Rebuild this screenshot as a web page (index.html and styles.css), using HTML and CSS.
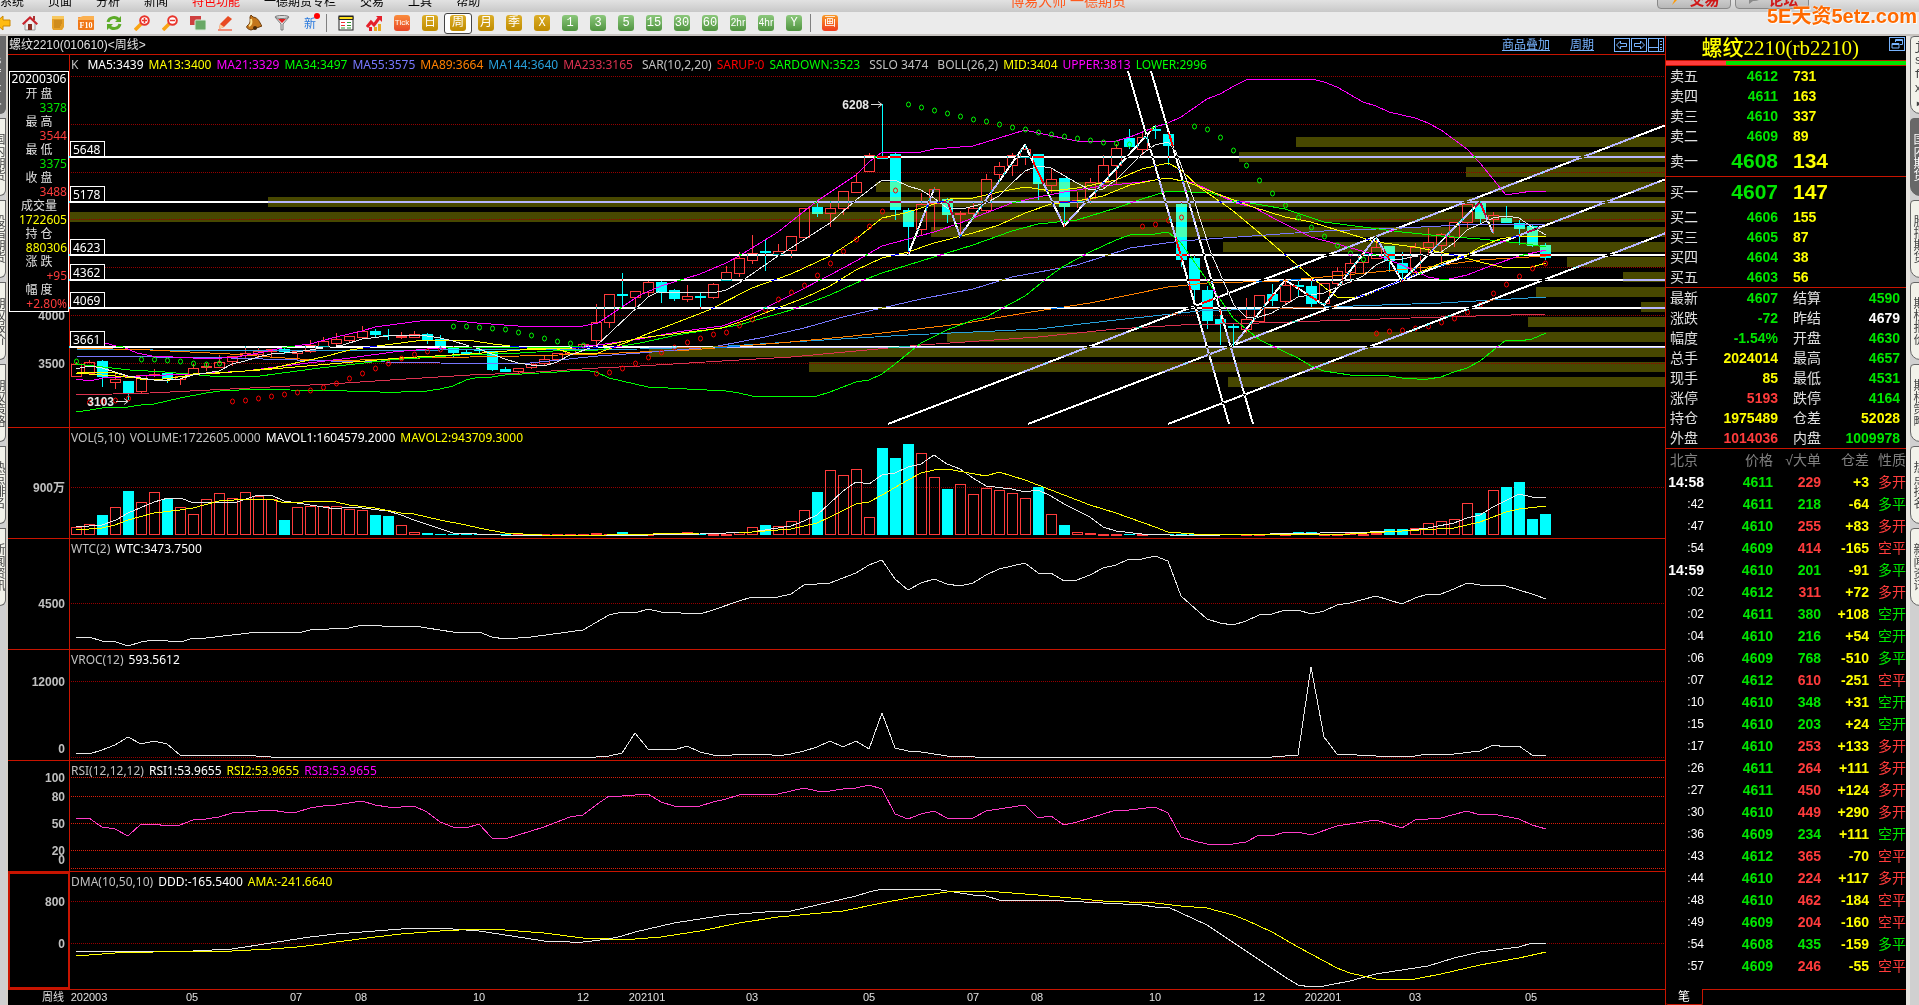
FILE: index.html
```
<!DOCTYPE html>
<html lang="zh-CN">
<head>
  <meta charset="UTF-8">
  <meta name="viewport" content="width=device-width, initial-scale=1.0">
  <title>螺纹2210 周线</title>
  <link rel="stylesheet" href="styles.css">
</head>
<body>
  <header class="menubar">
    <nav class="menu">
      <a href="#">系统</a><a href="#">页面</a><a href="#">分析</a><a href="#">新闻</a><a href="#" class="hot">特色功能</a><a href="#">一德期货专栏</a><a href="#">交易</a><a href="#">工具</a><a href="#">帮助</a>
    </nav>
    <div class="app-title">博易大师 一德期货</div>
    <div class="top-buttons">
      <button><svg width="16" height="14" viewBox="0 0 16 14"><path d="M10 0L2 8h5l-3 6 9-9H8l4-5z" fill="#f90"/></svg>交易</button>
      <button><svg width="18" height="14" viewBox="0 0 18 14"><path d="M1 5a8 5 0 0 1 16 0a8 5 0 0 1-9 5l-4 3v-4A7 5 0 0 1 1 5z" fill="#8a8a8a"/></svg>论坛</button>
    </div>
  </header>

  <div class="toolbar">
    <button class="first" aria-label="后退"><svg width="16" height="16" viewBox="6 0 16 16"><path d="M1 8l8-7v4h7v6H9v4z" fill="#fb1" stroke="#c80"/></svg></button>
    <button aria-label="首页"><svg width="16" height="16" viewBox="0 0 16 16"><path d="M3 8v7h10V8L8 3z" fill="#eee" stroke="#999"/><path d="M11 1h2v4h-2z" fill="#a33"/><path d="M0 8.500L8 1l8 7.500-1.500 1.500L8 4 1.500 10z" fill="#c8232c"/><path d="M6 9h4v6H6z" fill="#8a2b20"/></svg></button>
    <button aria-label="资讯"><svg width="16" height="16" viewBox="0 0 16 16"><path d="M2 1h12v11l-2 3H3l-1-2z" fill="#e5a028"/><path d="M2 1h12v3H2z" fill="#f7c860"/><path d="M4 6h8M4 8h8M4 10h7M4 12h6" stroke="#b97812"/></svg></button>
    <button aria-label="F10"><svg width="16" height="16" viewBox="0 0 16 16"><rect x="0" y="2" width="16" height="13" rx="1" fill="#f07818"/><path d="M0 3l5-2h11v4H0z" fill="#fbb050"/><text x="8" y="13" text-anchor="middle" class="f10">F10</text></svg></button>
    <button aria-label="刷新"><svg width="16" height="16" viewBox="0 0 16 16"><path d="M2 7c1-5 8-6 11-2M14 9c-1 5-8 6-11 2" fill="none" stroke="#5cab28" stroke-width="3"/><path d="M15 1v6H9zM1 15V9h6z" fill="#5cab28"/></svg></button>
    <button aria-label="放大"><svg width="16" height="16" viewBox="0 0 16 16"><path d="M1 15l6-6" stroke="#f9a414" stroke-width="3.500"/><circle cx="10.500" cy="5.500" r="4.300" fill="#fff" stroke="#e8342c" stroke-width="2"/><path d="M8 5.500h5M10.500 3v5" stroke="#e8342c" stroke-width="1.500"/></svg></button>
    <button aria-label="缩小"><svg width="16" height="16" viewBox="0 0 16 16"><path d="M1 15l6-6" stroke="#f9a414" stroke-width="3.500"/><circle cx="10.500" cy="5.500" r="4.300" fill="#fff" stroke="#e8342c" stroke-width="2"/><path d="M8 5.500h5" stroke="#e8342c" stroke-width="1.500"/></svg></button>
    <button aria-label="叠加"><svg width="16" height="16" viewBox="0 0 16 16"><rect x="0" y="1" width="11" height="9" fill="#cf3f3f"/><rect x="5" y="5" width="11" height="10" rx="1" fill="#69a866" stroke="#d8e8d8"/></svg></button>
    <button aria-label="画线"><svg width="16" height="16" viewBox="0 0 16 16"><path d="M2 9l8-8 4 3-8 8-5 2z" fill="#e84a22"/><path d="M1 14l1-5 4 3z" fill="#fbcf9a"/><path d="M0 15h14" stroke="#f26b50" stroke-width="1.500"/></svg></button>
    <button aria-label="预警"><svg width="16" height="16" viewBox="0 0 16 16"><path d="M5 0l2 2c6 1 6 5 9 9L5 15c-4-1-5-3-4-4 4-3 3-5 3-9z" fill="#c4761c" stroke="#6b3a0a"/><path d="M5 4c1 4 0 6-2 7" stroke="#ffe08a" fill="none" stroke-width="2"/><circle cx="9" cy="13" r="2" fill="#4a2a08"/></svg></button>
    <button aria-label="筛选"><svg width="16" height="16" viewBox="0 0 16 16"><path d="M1 2l6 7v6h2V9l6-7z" fill="#e8e8e8" stroke="#777"/><path d="M4 4h8L8 8z" fill="#e02020"/><ellipse cx="8" cy="2" rx="7" ry="1.500" fill="#ddd" stroke="#777"/></svg></button>
    <button class="new">新<i></i></button>
    <span class="sep"></span>
    <button aria-label="报价"><svg width="16" height="16" viewBox="0 0 16 16"><rect x="1" y="1" width="14" height="14" fill="#fff" stroke="#222"/><path d="M1 1.500h14v3H1z" fill="#ffe01a" stroke="#222"/><path d="M3 7.500h4M3 10.500h4" stroke="#e33"/><path d="M9 7.500h4M9 10.500h4M9 13h4M3 13h4" stroke="#393"/></svg></button>
    <button aria-label="走势"><svg width="16" height="16" viewBox="0 0 16 16"><path d="M1 12l4-5 3 3 6-8" fill="none" stroke="#e5202a" stroke-width="3"/><path d="M10 1h6v6z" fill="#e5202a"/><path d="M3 12h3v4H3z" fill="#e5202a"/><path d="M8 12h3v4H8z" fill="#e8a820"/><path d="M12 9h3v7h-3z" fill="#e8a820"/></svg></button>
    <button><span class="chip tick">Tick</span></button>
    <button><span class="chip gold">日</span></button>
    <button class="selected"><span class="chip gold">周</span></button>
    <button><span class="chip gold">月</span></button>
    <button><span class="chip gold">季</span></button>
    <button><span class="chip gold">X</span></button>
    <button><span class="chip green">1</span></button>
    <button><span class="chip green">3</span></button>
    <button><span class="chip green">5</span></button>
    <button><span class="chip green">15</span></button>
    <button><span class="chip green">30</span></button>
    <button><span class="chip green">60</span></button>
    <button><span class="chip green small">2hr</span></button>
    <button><span class="chip green small">4hr</span></button>
    <button><span class="chip green">Y</span></button>
    <span class="sep"></span>
    <button><span class="chip draw">画</span></button>
  </div>
  <div class="watermark">5E天资5etz.com</div>

  <main class="workspace">
    <nav class="rail left">
      <button class="on latin">jsfx▸</button><button>国内期货</button><button>股指期货</button><button>期权报价</button><button>期权策略</button><button>热点排名</button><button>新闻资讯</button>
    </nav>

    <section class="chart">
      <header class="chart-head">
        <h1>螺纹2210(010610)&lt;周线&gt;</h1>
        <a href="#">商品叠加</a><a href="#">周期</a>
        <div class="head-icons">
          <button aria-label="左移"><svg width="17" height="15" viewBox="0 0 17 15"><rect x=".5" y=".5" width="15" height="13"/><path d="M2.500 7l4-4v2.500h6v3h-6V11z"/></svg></button>
          <button aria-label="右移"><svg width="17" height="15" viewBox="0 0 17 15"><rect x=".5" y=".5" width="15" height="13"/><path d="M13.500 7l-4-4v2.500h-6v3h6V11z"/></svg></button>
          <button aria-label="窗口"><svg width="17" height="15" viewBox="0 0 17 15"><rect x=".5" y=".5" width="15" height="13"/><path d="M1 9.500h9.500M10.500 1v12M12 3.500h2M12 6.500h2M12 9.500h2M12 11.500h2"/></svg></button>
        </div>
      </header>

      <div class="panel">
        <svg id="price"></svg>
        <p class="legend"><span class="end">K</span><span class="w">MA5:3439</span><span class="y">MA13:3400</span><span class="m">MA21:3329</span><span class="g">MA34:3497</span><span class="ma55">MA55:3575</span><span class="ma89">MA89:3664</span><span class="ma144">MA144:3640</span><span class="ma233 end">MA233:3165</span><span>SAR(10,2,20)</span><span class="sar">SARUP:0</span><span class="g end">SARDOWN:3523</span><span class="end">SSLO 3474</span><span>BOLL(26,2)</span><span class="y">MID:3404</span><span class="m">UPPER:3813</span><span class="g">LOWER:2996</span></p>
        <dl class="quote-box">
          <dt class="date">20200306</dt>
          <dt>开 盘</dt><dd class="down">3378</dd>
          <dt>最 高</dt><dd class="up">3544</dd>
          <dt>最 低</dt><dd class="down">3375</dd>
          <dt>收 盘</dt><dd class="up">3488</dd>
          <dt>成交量</dt><dd class="y">1722605</dd>
          <dt>持 仓</dt><dd class="y">880306</dd>
          <dt>涨 跌</dt><dd class="up">+95</dd>
          <dt>幅 度</dt><dd class="up">+2.80%</dd>
        </dl>
      </div>
      <div class="panel">
        <svg id="vol"></svg>
        <p class="legend"><span>VOL(5,10)</span><span>VOLUME:1722605.0000</span><span class="w">MAVOL1:1604579.2000</span><span class="y">MAVOL2:943709.3000</span></p>
      </div>
      <div class="panel">
        <svg id="wtc"></svg>
        <p class="legend"><span>WTC(2)</span><span class="w">WTC:3473.7500</span></p>
      </div>
      <div class="panel">
        <svg id="vroc"></svg>
        <p class="legend"><span>VROC(12)</span><span class="w">593.5612</span></p>
      </div>
      <div class="panel">
        <svg id="rsi"></svg>
        <p class="legend"><span>RSI(12,12,12)</span><span class="w">RSI1:53.9655</span><span class="y">RSI2:53.9655</span><span class="m">RSI3:53.9655</span></p>
      </div>
      <div class="panel">
        <svg id="dma"></svg>
        <p class="legend"><span>DMA(10,50,10)</span><span class="w">DDD:-165.5400</span><span class="y">AMA:-241.6640</span></p>
      </div>
      <div class="dates"><svg id="dates"></svg></div>
    </section>

    <aside class="quote">
      <h2>螺纹2210(rb2210)
        <button aria-label="还原"><svg width="16" height="14" viewBox="0 0 16 14"><rect x=".5" y=".5" width="15" height="13"/><path d="M6.500 5V2.500h7v5H11M3 6.500h7v4.500H3zM6.500 3.500h7M3 7.500h7"/></svg></button>
      </h2>
      <div class="ratio"><i></i></div>
      <table class="book">
        <tbody>
          <tr><th>卖五</th><td class="down">4612</td><td>731</td></tr>
          <tr><th>卖四</th><td class="down">4611</td><td>163</td></tr>
          <tr><th>卖三</th><td class="down">4610</td><td>337</td></tr>
          <tr><th>卖二</th><td class="down">4609</td><td>89</td></tr>
          <tr class="big"><th>卖一</th><td class="down">4608</td><td>134</td></tr>
        </tbody>
        <tbody>
          <tr class="big"><th>买一</th><td class="down">4607</td><td>147</td></tr>
          <tr><th>买二</th><td class="down">4606</td><td>155</td></tr>
          <tr><th>买三</th><td class="down">4605</td><td>87</td></tr>
          <tr><th>买四</th><td class="down">4604</td><td>38</td></tr>
          <tr><th>买五</th><td class="down">4603</td><td>56</td></tr>
        </tbody>
      </table>
      <table class="stats">
        <tr><th>最新</th><td class="down">4607</td><th>结算</th><td class="down">4590</td></tr>
        <tr><th>涨跌</th><td class="down">-72</td><th>昨结</th><td class="w">4679</td></tr>
        <tr><th>幅度</th><td class="down">-1.54%</td><th>开盘</th><td class="down">4630</td></tr>
        <tr><th>总手</th><td class="y">2024014</td><th>最高</th><td class="down">4657</td></tr>
        <tr><th>现手</th><td class="y">85</td><th>最低</th><td class="down">4531</td></tr>
        <tr><th>涨停</th><td class="up">5193</td><th>跌停</th><td class="down">4164</td></tr>
        <tr><th>持仓</th><td class="y">1975489</td><th>仓差</th><td class="y">52028</td></tr>
        <tr><th>外盘</th><td class="up">1014036</td><th>内盘</th><td class="down">1009978</td></tr>
      </table>
      <table class="ticks">
        <thead><tr><th>北京</th><th>价格</th><th>√大单</th><th>仓差</th><th>性质</th></tr></thead>
        <tbody id="ticks"></tbody>
      </table>
      <div class="quote-tabs"><button>笔</button><span></span></div>
    </aside>

    <nav class="rail right">
      <button class="latin">jsfx▸</button><button class="on">国内期货</button><button>股指期货</button><button>期权报价</button><button>期权策略</button><button>热点排名</button><button>新闻资讯</button>
    </nav>
  </main>
  <script src="chart.js"></script>
</body>
</html>
```
FILE: styles.css
```
* {
  box-sizing: border-box;
}

body {
  margin: 0;
  height: 100vh;
  display: flex;
  flex-direction: column;
  overflow: hidden;
  background: #000;
  color: #c0c0c0;
  font-family: "Noto Sans", "Noto Sans CJK SC", sans-serif;
  font-size: 12px;
}

button {
  border: 0;
  padding: 0;
  background: none;
  color: inherit;
  font: inherit;
}

h1, h2, p, dl, dd {
  margin: 0;
}

.w { color: #fff; }
.y { color: #ff0; }
.m { color: #f0f; }
.g { color: #0f0; }
.up { color: #ff3c3c; }
.down { color: #00e600; }
.sar { color: #f00; }
.ma55 { color: #7878ff; }
.ma89 { color: #ff8000; }
.ma144 { color: #28a0dc; }
.ma233 { color: #dc3250; }

/* menu */
.menubar {
  flex: none;
  display: flex;
  align-items: flex-end;
  height: 12px;
  overflow: hidden;
  background: linear-gradient(#e2e2e2, #c8c8c8);
}

.menu {
  flex: 25;
  display: flex;
  gap: 24px;
  line-height: 16px;
  padding-bottom: 2px;
}

.menu a {
  color: #000;
  text-decoration: none;
}

.menu .hot {
  color: #f00;
}

.app-title {
  flex: 16;
  padding-bottom: 2px;
  font-size: 14px;
  line-height: 18px;
  color: #ff5a1e;
}

.top-buttons {
  display: flex;
  gap: 4px;
  padding: 0 110px 3px 0;
}

.top-buttons button {
  display: flex;
  align-items: center;
  justify-content: center;
  gap: 5px;
  width: 74px;
  height: 22px;
  border: 1px solid #888;
  border-radius: 4px;
  background: linear-gradient(#e8e8e8, #b8b8b8);
  font-size: 15px;
  font-weight: bold;
  color: #d01818;
}

/* toolbar */
.toolbar {
  flex: none;
  display: flex;
  align-items: center;
  height: 24px;
  background: #ebebeb;
  border-bottom: 2px solid #c8c4c0;
}

.toolbar button {
  display: flex;
  align-items: center;
  justify-content: center;
  width: 28px;
  height: 21px;
}

.toolbar .first {
  width: 16px;
}

.toolbar .selected {
  border: 1px solid #444;
  border-radius: 3px;
  background: #fff;
}

.toolbar .new {
  position: relative;
  color: #2878dc;
}

.new i {
  position: absolute;
  top: 0;
  right: 4px;
  width: 6px;
  height: 6px;
  border-radius: 50%;
  background: #f00;
}

.sep {
  width: 8px;
  height: 18px;
  border-left: 1px solid #808080;
  margin: 0 -2px 0 2px;
}

.f10 {
  font: bold 8px "Liberation Serif", serif;
  fill: #fff;
}

.chip {
  width: 16px;
  height: 16px;
  border-radius: 3px;
  overflow: hidden;
  color: #fff;
  font: 12px/16px "Liberation Mono", "Noto Sans CJK SC", monospace;
  text-align: center;
}

.chip.gold { background: linear-gradient(#dcae28, #c08c00); }
.chip.green { background: linear-gradient(#8cc87c, #509440); }
.chip.draw { background: linear-gradient(#f89a28, #f03c20); }
.chip.tick {
  background: linear-gradient(#fa8c3c, #e84828);
  font-family: "Liberation Sans", sans-serif;
  font-size: 8px;
}
.chip.small {
  font-family: "Liberation Sans", sans-serif;
  font-size: 10px;
}

.watermark {
  position: absolute;
  top: 4px;
  right: 2px;
  font: bold 20px/24px "Liberation Sans", "Noto Sans CJK SC", sans-serif;
  color: #ff6a00;
  text-shadow: 0 0 2px #fff, 1px 1px 1px #fff;
}

/* workspace */
.workspace {
  flex: 1;
  min-height: 0;
  display: grid;
  grid-template-columns: 8px minmax(0, 1fr) 241px 13px;
}

.rail {
  display: flex;
  flex-direction: column;
  gap: 4px;
  overflow: hidden;
  background: #d0d0d0;
}

.rail.left {
  border-right: 2px solid #d4d0c8;
}

.rail.right {
  border-left: 4px solid #e8e4e0;
}

.rail button {
  flex: none;
  display: flex;
  align-items: center;
  justify-content: center;
  height: 78px;
  border: 1px solid #666;
  background: #f2f2ea;
  color: #444;
  writing-mode: vertical-rl;
  font-size: 12px;
  line-height: 14px;
  white-space: nowrap;
}

.rail .latin {
  text-orientation: upright;
  font-family: "Liberation Mono", monospace;
}

.rail.left button {
  align-items: flex-start;
  border-left: 0;
  border-radius: 0 0 8px 0;
}

.rail.right button {
  width: 16px;
  border-radius: 4px 0 0 10px;
}

.rail .on {
  background: #686868;
  color: #fff;
}

/* chart */
.chart {
  display: grid;
  grid-template-rows: 19px 373fr 111fr 111fr 111fr 111fr 118fr 15px;
  min-height: 0;
}

.chart-head {
  display: flex;
  align-items: center;
  gap: 20px;
  border-bottom: 1px solid #c81400;
}

.chart-head h1 {
  flex: 1;
  padding-left: 1px;
  font: 12px/18px "Liberation Sans", "Noto Sans CJK SC", sans-serif;
  color: #e0e0e0;
}

.chart-head a {
  color: #78b4ff;
  line-height: 18px;
}

.head-icons {
  display: flex;
}

.chart-head button,
.quote h2 button {
  display: flex;
}

.chart-head svg,
.quote h2 svg {
  fill: none;
  stroke: #78b4ff;
}

.panel {
  position: relative;
  min-height: 0;
  border-bottom: 1px solid #c81400;
}

.panel svg,
.dates svg {
  display: block;
  position: absolute;
  width: 100%;
  height: 100%;
}

.dates {
  position: relative;
}

.legend {
  position: absolute;
  top: 1px;
  left: 63px;
  display: flex;
  gap: 5px;
  line-height: 18px;
  white-space: nowrap;
}

.legend .end {
  margin-right: 4px;
}

.quote-box {
  position: absolute;
  top: 16px;
  left: 1px;
  width: 60px;
  padding: 0 1px;
  border: 1px solid #fff;
  background: #000;
  line-height: 14px;
  text-align: right;
}

.quote-box dt {
  color: #e0e0e0;
  text-align: center;
  white-space: pre;
}

.quote-box .date {
  margin-bottom: 1px;
  color: #fff;
}

/* chart drawing */
.grid { stroke: #960000; stroke-dasharray: 1 1; }
.grid.bright { stroke: #dc1e0a; }
.axis { stroke: #c81400; }
.axis-label {
  fill: #c0c0c0;
  font: bold 12px "Liberation Sans", "Noto Sans CJK SC", sans-serif;
  text-anchor: end;
}
.date-label {
  fill: #e0e0e0;
  font: 11px "Liberation Sans", "Noto Sans CJK SC", sans-serif;
  text-anchor: middle;
}
.line { fill: none; shape-rendering: crispEdges; }
.band { fill: #484800; }
.drawn {
  fill: none;
  stroke: #fff;
  stroke-width: 2;
  shape-rendering: crispEdges;
  mix-blend-mode: difference;
}
.tag { fill: #000; stroke: #fff; }
.tag-label { fill: #fff; font-size: 12px; }
.peak { fill: #e8e8e8; font: bold 12px "Liberation Sans", sans-serif; text-anchor: end; }
.focus { fill: none; stroke: #c81400; stroke-width: 2; }

/* quote panel */
.quote {
  display: flex;
  flex-direction: column;
  min-height: 0;
  border-left: 1px solid #c81400;
}

.quote h2 {
  display: flex;
  align-items: center;
  justify-content: flex-end;
  gap: 30px;
  height: 24px;
  padding-right: 1px;
  font: 500 21px/24px "Liberation Serif", "Noto Sans CJK SC", serif;
  color: #ff0;
}

.quote h2 button {
  align-self: flex-start;
  padding-top: 1px;
}

.ratio {
  height: 6px;
  border: solid #c81400;
  border-width: 1px 0;
  background: #00e600;
}

.ratio i {
  display: block;
  width: 25%;
  height: 4px;
  background: #ff3c3c;
}

.quote table {
  width: 100%;
  border-collapse: collapse;
  table-layout: fixed;
  font: bold 14px/20px "Liberation Sans", "Noto Sans CJK SC", sans-serif;
}

.quote th {
  padding: 0 0 0 4px;
  text-align: left;
  font-weight: normal;
  color: #e0e0e0;
}

.quote td {
  padding: 0;
  text-align: right;
}

.book {
  color: #ff0;
}

.book tbody {
  border-bottom: 1px solid #c81400;
}

.book th {
  width: 50px;
}

.book td:nth-child(2) {
  width: 62px;
}

.book td:last-child {
  padding-left: 15px;
  text-align: left;
}

.book .big td {
  font-size: 21px;
  line-height: 30px;
}

.stats {
  border-bottom: 1px solid #c81400;
}

.stats th {
  width: 48px;
}

.stats th:nth-child(3) {
  width: 62px;
  padding-left: 15px;
}

.stats td:last-child {
  padding-right: 6px;
}

.stats td:nth-child(2) {
  width: 64px;
}

.quote .ticks {
  line-height: 22px;
}

.ticks th {
  padding: 0;
  text-align: right;
  color: #808080;
}

.ticks th:first-child {
  width: 38px;
  padding-left: 4px;
  text-align: left;
}

.ticks td:first-child {
  color: #fff;
}

.ticks .sec td:first-child {
  font-size: 12px;
  font-weight: normal;
}

.ticks th:nth-child(2) { width: 69px; }
.ticks th:nth-child(3) { width: 48px; }
.ticks th:nth-child(4) { width: 48px; }
.ticks td:nth-child(4) { color: #ff0; }
.ticks td:last-child { font-weight: normal; }

.quote-tabs {
  display: flex;
  height: 16px;
  margin-top: auto;
}

.quote-tabs button {
  width: 37px;
  border: solid #c81400;
  border-width: 0 1px 1px 0;
  border-radius: 0 0 2px 2px;
  line-height: 14px;
  color: #fff;
}

.quote-tabs span {
  flex: 1;
  border-top: 1px solid #c81400;
}
```
FILE: chart.js
```
const NS = 'http://www.w3.org/2000/svg';
const AXIS = 61;      // width of the scale column
const WIDTH = 1657;   // nominal width the series were plotted on
const UP = '#ff3c3c', DOWN = '#00ffff';

// body top, body bottom, high, low for every week
const candles = `
r364,376,362,376 r362,373,360,373 c361,377,360,387 r379,382,373,389 c381,393,381,400 r375,391,375,393 r374,375,369,377
c373,379,373,383 r376,379,376,385 r368,374,364,374 r366,367,363,371 r362,367,355,367 r356,361,356,366 r353,355,346,358
r351,354,347,358 r349,351,349,358 c349,352,348,354 r351,353,351,360 r345,351,340,353 r341,346,337,346 r339,343,333,345
r336,340,336,343 r331,337,326,337 c331,335,329,337 c335,336,329,340 r336,337,332,339 r334,337,331,337 c334,340,333,344
c339,346,335,348 c348,353,346,357 c352,354,350,355 c350,351,348,353 c351,370,351,371 c369,372,367,372 r368,371,368,373
r364,367,362,369 r359,363,356,365 r353,359,353,359 r348,353,348,353 r344,349,344,349 r322,340,304,346 r294,322,294,328
c294,296,273,306 r291,297,291,308 r282,292,281,296 c282,293,281,303 c290,299,289,301 r296,299,285,302 c296,298,293,309
r284,297,283,299 r272,280,266,280 r258,273,252,277 r253,260,235,264 c251,253,239,271 r251,254,244,255 r236,250,236,258
r208,237,208,237 c207,214,202,217 r208,213,201,227 r191,208,191,215 r182,192,173,193 r155,171,153,171 c156,159,104,159
c154,210,152,220 c210,227,208,255 r204,229,193,235 r189,203,187,230 c199,215,198,223 r213,214,211,237 r208,213,202,215
r179,210,174,213 r166,174,162,182 r155,165,153,176 r149,157,145,165 c154,184,154,200 r179,185,169,193 c178,207,178,227
r200,201,192,208 r182,198,178,204 r165,182,155,188 r148,165,144,185 c138,147,129,149 r137,149,133,155 c129,131,125,139
c134,146,132,165 c204,260,202,267 c258,290,255,300 c290,321,286,329 c319,324,310,345 c326,328,323,346 r319,329,298,333
r295,321,295,323 c294,301,284,306 r285,301,279,304 c285,287,279,297 c286,304,279,308 r283,303,283,305 r271,283,267,287
r263,272,259,283 r254,262,254,273 r247,258,238,258 c246,261,246,272 c263,273,252,282 r247,272,243,272 r242,247,228,255
r234,245,233,264 r222,237,222,247 r204,222,204,228 c203,219,201,223 r215,219,212,234 c218,223,206,223 c223,229,220,245
c226,246,224,247 c245,258,243,260`.trim().split(/\s+/);

const volumes = [
  8,11,20,28,44,33,43,36,28,21,36,42,37,43,39,36,15,28,29,29,29,26,25,20,19,10,3,2,1,1,1,1,1,1,1,1,1,1,1,1,2,1,3,1,1,1,1,3,
  1,1,1,3,8,10,9,14,25,43,65,60,66,18,87,77,91,82,58,46,51,41,47,45,42,37,48,21,10,3,2,1,1,1,1,1,1,1,1,1,1,1,1,1,1,1,3,3,1,1,2,1,2,
  6,6,7,12,14,16,32,22,45,48,53,16,21
];

// volume-at-price bands: [top, left]
const bands = [[137,1296],[152,1239],[167,1466],[182,876],[197,268],[212,70],[227,931],[242,1223],[257,1567],[272,1623],
  [287,1536],[302,1641],[317,1528],[332,947],[347,649],[362,809],[377,1228]];

const levels = [[5648,156],[5178,201],[4623,254],[4362,279],[4069,307],[3661,346]];

const averages = {
  '#dc3250': '76,395 150,393 230,389 330,384 390,380 470,375 520,373 598,368 640,366 722,361 791,357 856,351 921,345 1038,337 1116,329 1181,325 1260,323 1350,320 1441,317 1546,314',
  '#28a0dc': '76,349 230,351 440,350 640,349 713,347 791,342 908,335 1038,329 1116,320 1181,313 1200,311 1324,307 1441,303 1546,297',
  '#ff8000': '76,348 150,350 230,354 270,357 330,361 420,358 520,356 598,354 640,352 689,350 779,343 843,337 882,333 960,324 1025,313 1090,303 1168,287 1207,283 1280,281 1376,272 1428,267 1480,260 1546,256',
  '#7878ff': '76,356 230,358 330,361 440,363 520,364 598,356 640,353 689,349 713,347 765,337 804,328 843,317 882,308 921,299 973,289 1012,277 1077,265 1130,248 1181,241 1280,234 1324,231 1402,228 1480,224 1546,224',
  '#00ff00': '76,364 130,370 165,372 210,376 260,376 320,368 390,360 460,355 520,353 570,350 598,350 640,343 677,335 739,325 791,310 830,295 856,283 882,273 934,257 973,245 1012,231 1038,224 1077,220 1116,208 1142,199 1168,191 1211,193 1233,200 1285,209 1324,222 1363,227 1402,232 1441,236 1480,239 1519,243 1546,247',
  '#ff00ff': '76,379 90,381 103,378 140,376 193,374 245,371 300,364 350,358 393,352 427,349 466,347 570,347 598,345 640,339 677,332 722,326 739,320 765,308 791,295 830,275 856,261 882,246 908,239 934,232 960,223 986,213 1012,203 1038,197 1064,192 1103,186 1142,182 1168,178 1194,183 1236,203 1253,207 1277,220 1311,237 1337,244 1376,255 1402,265 1428,277 1445,280 1467,275 1493,265 1519,256 1546,250',
  '#ffff00': '76,372 115,373 140,379 157,380 170,380 180,379 193,374 220,373 245,371 273,368 300,362 323,357 350,350 377,346 401,343 423,340 467,340 493,344 527,348 557,349 570,353 598,353 625,343 652,332 709,310 752,288 791,274 830,256 856,239 882,218 905,213 934,204 950,199 973,198 999,192 1025,187 1051,191 1077,188 1116,180 1142,169 1168,163 1181,170 1199,187 1232,210 1268,240 1311,277 1337,297 1350,298 1367,295 1402,280 1441,263 1467,255 1480,247 1500,239 1519,236 1546,237',
  '#ffff01': '76,373 115,376 156,380 200,374 260,370 330,364 400,358 470,354 520,350 598,347 640,338 722,328 752,318 804,298 830,286 856,270 882,258 908,252 934,243 973,233 999,225 1025,213 1051,204 1077,201 1103,196 1130,185 1155,180 1168,178 1187,182 1215,193 1253,207 1285,217 1311,222 1337,230 1376,242 1415,247 1454,255 1480,262 1506,268 1532,267 1546,263',
  '#ff00fe': '105,343 116,346 123,347 137,353 152,356 193,358 207,359 237,357 258,353 287,347 310,344 336,337 362,331 375,327 427,320 447,320 477,323 518,326 557,326 583,326 598,323 625,305 640,295 661,286 700,274 726,263 739,256 765,240 778,232 817,201 856,175 869,162 882,152 921,152 934,149 973,146 999,138 1025,130 1038,133 1077,141 1116,141 1130,137 1155,127 1168,123 1181,117 1207,99 1220,94 1234,86 1246,80 1260,79 1312,79 1324,82 1337,87 1363,102 1376,106 1389,112 1415,118 1428,123 1441,130 1467,149 1480,163 1506,195 1519,193 1532,191 1546,192',
  '#00ff01': '76,412 90,410 102,408 128,407 141,405 154,404 180,398 206,393 220,391 258,389 290,390 347,391 380,392 401,392 427,391 440,389 453,386 466,380 479,377 492,377 505,375 557,372 583,370 596,372 609,378 648,387 687,389 726,391 739,393 752,396 765,397 791,396 804,397 817,396 830,392 856,382 869,380 882,374 895,364 921,343 947,330 973,320 986,317 999,310 1025,296 1051,275 1064,266 1090,252 1116,240 1130,235 1155,234 1168,232 1181,243 1200,270 1233,318 1246,329 1260,340 1285,352 1298,358 1311,366 1324,371 1350,375 1376,375 1389,376 1402,378 1417,379 1428,379 1441,377 1454,372 1467,368 1480,361 1506,340 1519,341 1532,339 1546,333',
  '#e8e8e8': '76,369 89,366 102,368 115,372 128,376 141,378 154,380 167,380 180,379 193,375 206,373 219,371 232,364 245,361 258,357 271,354 297,352 323,348 343,345 362,339 388,336 414,335 427,336 440,338 453,341 466,345 479,349 492,354 505,359 518,363 531,365 544,366 557,362 570,355 596,346 645,300 648,297 658,292 713,293 726,290 739,283 778,256 791,248 830,223 856,200 882,180 895,180 908,186 921,190 934,198 947,208 962,209 986,203 999,196 1012,183 1025,171 1038,166 1051,168 1077,183 1090,190 1103,189 1116,180 1142,154 1155,145 1168,142 1175,150 1181,165 1194,200 1211,253 1234,305 1246,317 1259,317 1272,313 1285,305 1298,297 1324,293 1337,287 1350,282 1363,276 1376,265 1389,259 1402,259 1428,254 1441,252 1454,243 1467,230 1480,224 1493,218 1506,216 1519,218 1532,227 1546,235'
};

// parabolic SAR dots: [first week, values]
const sarDown = [[0,[361]],[5,[359,359,360,361,363,364,363]],[29,[326,326,327,328,329,332,335,338,341,343,345]],
  [64,[104,107,110,113,116,119,121,124,127,129,132,134,136,138,140,142,143,144]],
  [86,[126,129,137,150,165,180,193,205,217,227,236,245,253,259]]];
const sarUp = [[1,[402,401,400,398]],[12,[401,400,398,396,394,392,390,387,383,378,373,368,363,358,354,351,349]],
  [40,[373,372,368,363,357,352,347,342,338,334,332,325,319,309,299,292,285,275,263,251,239,226,211,190]],
  [82,[226,224,220,217]],[100,[333,331,330,328,326,322,318,312,304,293,284,276,268,263]]];

const drawn = ['888,424 1666,125','1028,424 1666,179','1168,424 1666,233','1128,71 1229,424','1151,71 1253,424',
  '908,255 934,189','947,200 960,236 1025,145 1064,226 1155,126','1233,346 1285,280 1324,305 1376,237 1402,281 1480,202 1493,233'];

const mavol1 = '76,527 89,526 102,525 116,520 128,513 154,502 168,498 181,498 193,503 205,502 237,502 258,495 271,495 284,501 336,509 349,507 362,508 388,511 401,515 414,520 453,533 500,535 596,536 700,534 752,532 791,526 804,521 817,515 843,491 856,482 869,484 882,475 895,473 908,467 921,464 934,455 947,464 960,469 973,478 986,486 1012,489 1025,492 1038,490 1051,496 1064,504 1090,517 1103,527 1116,531 1142,534 1170,535 1220,535 1370,532 1402,531 1428,528 1454,523 1467,518 1480,515 1493,507 1519,494 1532,497 1546,498';
const mavol2 = '76,530 102,528 115,525 128,520 154,513 180,510 193,508 219,501 250,499 271,499 284,503 323,501 336,502 349,505 375,508 401,513 414,514 440,520 466,525 479,528 505,533 560,536 700,533 739,533 791,529 817,523 830,517 856,504 869,502 882,495 908,480 921,473 934,470 947,469 986,476 999,472 1025,480 1038,485 1090,505 1116,513 1155,527 1168,532 1194,534 1350,534 1454,528 1467,525 1480,522 1506,512 1519,509 1546,506';
const wtc = '76,637 89,637 102,641 116,642 128,646 141,642 154,640 181,642 193,638 206,638 258,632 284,632 298,633 310,630 349,628 362,625 401,627 414,626 427,628 453,632 479,632 492,637 505,639 531,637 583,630 609,615 622,612 635,613 648,609 661,612 700,614 713,610 739,601 752,597 765,598 778,597 791,594 804,585 830,583 856,573 869,565 882,560 895,579 908,590 921,583 934,579 947,584 960,586 973,583 986,575 999,569 1025,563 1038,573 1051,573 1064,581 1077,580 1090,575 1103,568 1116,565 1129,559 1142,559 1155,556 1168,561 1181,596 1207,619 1220,623 1233,625 1246,621 1259,615 1272,614 1285,610 1298,610 1311,614 1324,611 1337,605 1350,603 1376,596 1402,604 1415,598 1428,594 1441,594 1454,589 1467,583 1480,585 1506,586 1519,590 1532,594 1546,599';
const vroc = '76,753 89,754 102,750 115,745 128,737 141,744 154,741 167,744 180,755 240,755 271,757 596,757 609,756 622,753 635,733 648,749 674,750 687,746 700,752 713,755 726,756 739,754 765,754 778,756 791,754 804,751 817,747 830,741 843,747 856,741 869,749 882,713 895,748 908,751 921,752 947,756 975,757 1272,757 1298,755 1311,667 1324,737 1337,754 1376,756 1415,756 1428,754 1454,754 1480,751 1493,745 1506,747 1519,746 1532,755 1546,755';
const rsi = '76,819 89,818 102,827 115,829 128,836 141,824 154,824 167,826 180,825 193,820 206,819 219,817 232,813 271,810 284,812 297,812 310,808 323,806 336,805 362,801 375,805 388,807 401,807 414,806 427,812 440,822 453,827 466,828 479,824 492,838 505,839 544,827 570,817 583,815 596,805 609,796 622,796 648,794 661,802 674,806 700,806 713,802 726,799 739,795 752,794 778,794 804,788 817,791 830,791 843,789 856,788 869,785 882,789 895,814 908,819 921,814 934,811 947,818 973,818 986,811 1012,807 1025,805 1038,818 1051,816 1064,825 1077,822 1103,814 1116,810 1129,810 1155,807 1168,813 1181,837 1194,841 1207,844 1233,844 1246,842 1259,835 1272,836 1285,832 1298,832 1311,835 1337,826 1376,820 1402,828 1415,820 1441,818 1467,811 1480,815 1493,814 1519,819 1532,825 1546,829';
const ddd = '76,952 95,951 115,951 128,952 193,951 232,949 271,943 310,937 336,934 375,931 414,928 440,928 479,931 492,933 544,941 570,942 583,942 609,939 622,936 635,932 674,923 700,919 726,915 765,912 791,911 830,902 856,896 869,892 882,889 934,889 947,891 960,893 973,895 986,896 999,900 1012,901 1025,900 1051,900 1064,901 1103,903 1142,905 1155,907 1168,907 1194,919 1207,925 1246,951 1285,977 1298,985 1311,987 1324,986 1350,981 1376,974 1428,966 1454,958 1480,952 1519,947 1532,943 1546,943';
const ama = '76,956 115,953 154,952 180,951 232,951 271,949 297,947 323,944 336,942 375,937 401,934 440,931 479,929 505,930 544,933 583,938 609,939 635,939 661,937 700,931 739,923 778,917 843,911 882,903 908,898 947,892 986,891 1038,895 1103,901 1155,903 1181,906 1207,908 1233,915 1246,920 1272,932 1298,947 1324,961 1337,968 1350,973 1376,979 1402,980 1415,979 1441,974 1480,965 1519,958 1546,952';

// one drawing surface per panel; top/height give its nominal range
function surface(id, top, height) {
  const svg = document.getElementById(id);
  svg.innerHTML = '';
  const w = svg.clientWidth;
  const kx = (w - AXIS) / (WIDTH - AXIS);
  const ky = svg.clientHeight / height;
  const s = {
    w, h: svg.clientHeight, ky,
    x: v => AXIS + (v - 8 - AXIS) * kx,
    y: v => (v - top) * ky,
    week: i => AXIS + (7 + i * 13) * kx,
    half: Math.max(2, Math.round(5 * kx)),
    add(tag, attrs, text) {
      const el = document.createElementNS(NS, tag);
      for (const k in attrs) el.setAttribute(k, attrs[k]);
      if (text) el.textContent = text;
      svg.appendChild(el);
      return el;
    },
    rect(x, y, width, h, fill) {
      s.add('rect', { x, y, width, height: Math.max(1, h), fill, 'shape-rendering': 'crispEdges' });
    },
    line(points, stroke, cls) {
      const mapped = points.split(' ').map(p => {
        const [a, b] = p.split(',');
        return s.x(+a) + ',' + s.y(+b);
      }).join(' ');
      s.add('polyline', { points: mapped, stroke, class: cls || 'line' });
    },
    grid(rows, bright) {
      rows.forEach(([v, label, at]) => {
        const y = Math.round(s.y(v)) + 0.5;
        s.add('line', { x1: AXIS + 2, x2: w, y1: y, y2: y, class: bright ? 'grid bright' : 'grid' });
        if (label) s.add('text', { x: AXIS - 4, y: s.y(at || v) + 5, class: 'axis-label' }, label);
      });
      s.add('line', { x1: AXIS + 0.5, x2: AXIS + 0.5, y1: 0, y2: s.h, class: 'axis' });
    },
    box(x, y1, y2) {
      s.add('rect', { x: x - s.half + 0.5, y: Math.round(y1) + 0.5, width: s.half * 2, height: Math.max(1, Math.round(y2 - y1)), fill: 'none', stroke: UP });
    }
  };
  return s;
}

function drawPrice() {
  const s = surface('price', 55, 372);
  s.add('rect', { width: s.w, height: s.h, fill: '#000' });
  bands.forEach(([t, l]) => s.add('rect', { x: s.x(l), y: s.y(t), width: s.w - s.x(l), height: 10 * s.ky, class: 'band' }));
  s.grid([[76], [124], [172], [219], [267], [315, '4000'], [363, '3500']]);

  candles.forEach((c, i) => {
    const [top, bottom, high, low] = c.slice(1).split(',').map(Number);
    const x = Math.round(s.week(i));
    if (c[0] === 'r') {
      s.rect(x, s.y(high), 1, s.y(top) - s.y(high), UP);
      s.rect(x, s.y(bottom), 1, s.y(low) - s.y(bottom), UP);
      s.box(x, s.y(top), s.y(bottom));
    } else {
      s.rect(x, s.y(high), 1, s.y(low) - s.y(high), DOWN);
      s.rect(x - s.half, s.y(top), s.half * 2 + 1, s.y(bottom) - s.y(top), DOWN);
      // tint where a body crosses a band
      bands.forEach(([t, l]) => {
        const a = Math.max(t, top), b = Math.min(t + 10, bottom);
        if (b > a && s.x(l) < x) s.rect(x - s.half, s.y(a), s.half * 2 + 1, s.y(b) - s.y(a), '#48ffb7');
      });
    }
  });

  for (const color in averages) s.line(averages[color], color);
  [[sarDown, '#00ff00'], [sarUp, '#ff0000']].forEach(([runs, stroke]) => runs.forEach(([from, ys]) =>
    ys.forEach((v, i) => s.add('ellipse', { cx: s.week(from + i) + 0.5, cy: s.y(v) + 0.5, rx: 2, ry: 2.5, fill: 'none', stroke }))));

  drawn.forEach(d => s.line(d, '#fff', 'drawn'));
  levels.forEach(([price, v]) => {
    s.line(`69,${v + 1} 1666,${v + 1}`, '#fff', 'drawn');
    s.add('rect', { x: AXIS + 1.5, y: s.y(v - 15) + 0.5, width: 34, height: 15, class: 'tag' });
    s.add('text', { x: AXIS + 4, y: s.y(v) - 2, class: 'tag-label' }, String(price));
  });

  [['6208', 869, 104, 882], ['3103', 114, 401, 128]].forEach(([t, x, y, end]) => {
    s.add('text', { x: s.x(x), y: s.y(y) + 5, class: 'peak' }, t);
    s.add('path', { d: `M${s.x(x) + 2} ${s.y(y) + 0.5}H${s.x(end)}m-4-3l4 3l-4 3`, fill: 'none', stroke: '#ddd' });
  });
}

function drawVolume() {
  const s = surface('vol', 428, 110);
  s.grid([[487, '900万']]);
  volumes.forEach((v, i) => {
    const x = Math.round(s.week(i));
    if (candles[i][0] === 'r') s.box(x, s.y(535 - v), s.y(534));
    else s.rect(x - s.half, s.y(535 - v), s.half * 2 + 1, v * s.ky, DOWN);
  });
  s.line(mavol1, '#e8e8e8');
  s.line(mavol2, '#ffff00');
}

function drawIndicators() {
  let s = surface('wtc', 539, 110);
  s.grid([[603, '4500']]);
  s.line(wtc, '#e8e8e8');

  s = surface('vroc', 650, 110);
  s.grid([[681, '12000'], [757, '0', 748]]);
  s.line(vroc, '#e8e8e8');

  s = surface('rsi', 761, 110);
  s.grid([[777, '100'], [796, '80'], [823, '50'], [850, '20'], [868, '0', 859]], true);
  s.line(rsi, '#ff3cc8');

  s = surface('dma', 872, 117);
  s.grid([[901, '800'], [943, '0']]);
  s.line(ddd, '#e8e8e8');
  s.line(ama, '#ffff00');
  s.add('rect', { x: 1, y: 1, width: AXIS - 1, height: s.h - 2, class: 'focus' });
}

function drawDates() {
  const s = surface('dates', 990, 15);
  [['周线', 53], ['202003', 89], ['05', 192], ['07', 296], ['08', 361], ['10', 479], ['12', 583], ['202101', 647], ['03', 752], ['05', 869],
    ['07', 973], ['08', 1037], ['10', 1155], ['12', 1259], ['202201', 1323], ['03', 1415], ['05', 1531]]
    .forEach(([t, x]) => s.add('text', { x: s.x(x), y: 11, class: 'date-label' }, t));
}

function draw() {
  drawPrice();
  drawVolume();
  drawIndicators();
  drawDates();
}

// time, price, lots, open-interest change, kind; r/g is the side
const ticks = [
  ['14:58',4611,229,'+3','多开','r'],[':42',4611,218,'-64','多平','g'],[':47',4610,255,'+83','多开','r'],[':54',4609,414,'-165','空平','r'],
  ['14:59',4610,201,'-91','多平','g'],[':02',4612,311,'+72','多开','r'],[':02',4611,380,'+108','空开','g'],[':04',4610,216,'+54','空开','g'],
  [':06',4609,768,'-510','多平','g'],[':07',4612,610,'-251','空平','r'],[':10',4610,348,'+31','空开','g'],[':15',4610,203,'+24','空开','g'],
  [':17',4610,253,'+133','多开','r'],[':26',4611,264,'+111','多开','r'],[':27',4611,450,'+124','多开','r'],[':30',4610,449,'+290','多开','r'],
  [':36',4609,234,'+111','空开','g'],[':43',4612,365,'-70','空平','r'],[':44',4610,224,'+117','多开','r'],[':48',4610,462,'-184','空平','r'],
  [':49',4609,204,'-160','空平','r'],[':54',4608,435,'-159','多平','g'],[':57',4609,246,'-55','空平','r']
];

document.getElementById('ticks').innerHTML = ticks.map(([time, price, lots, diff, kind, side]) => {
  const cls = side === 'r' ? 'up' : 'down';
  return `<tr class="${time[0] === ':' ? 'sec' : ''}"><td>${time}</td><td class="down">${price}</td><td class="${cls}">${lots}</td><td>${diff}</td><td class="${cls}">${kind}</td></tr>`;
}).join('');

draw();
window.addEventListener('resize', draw);
```
